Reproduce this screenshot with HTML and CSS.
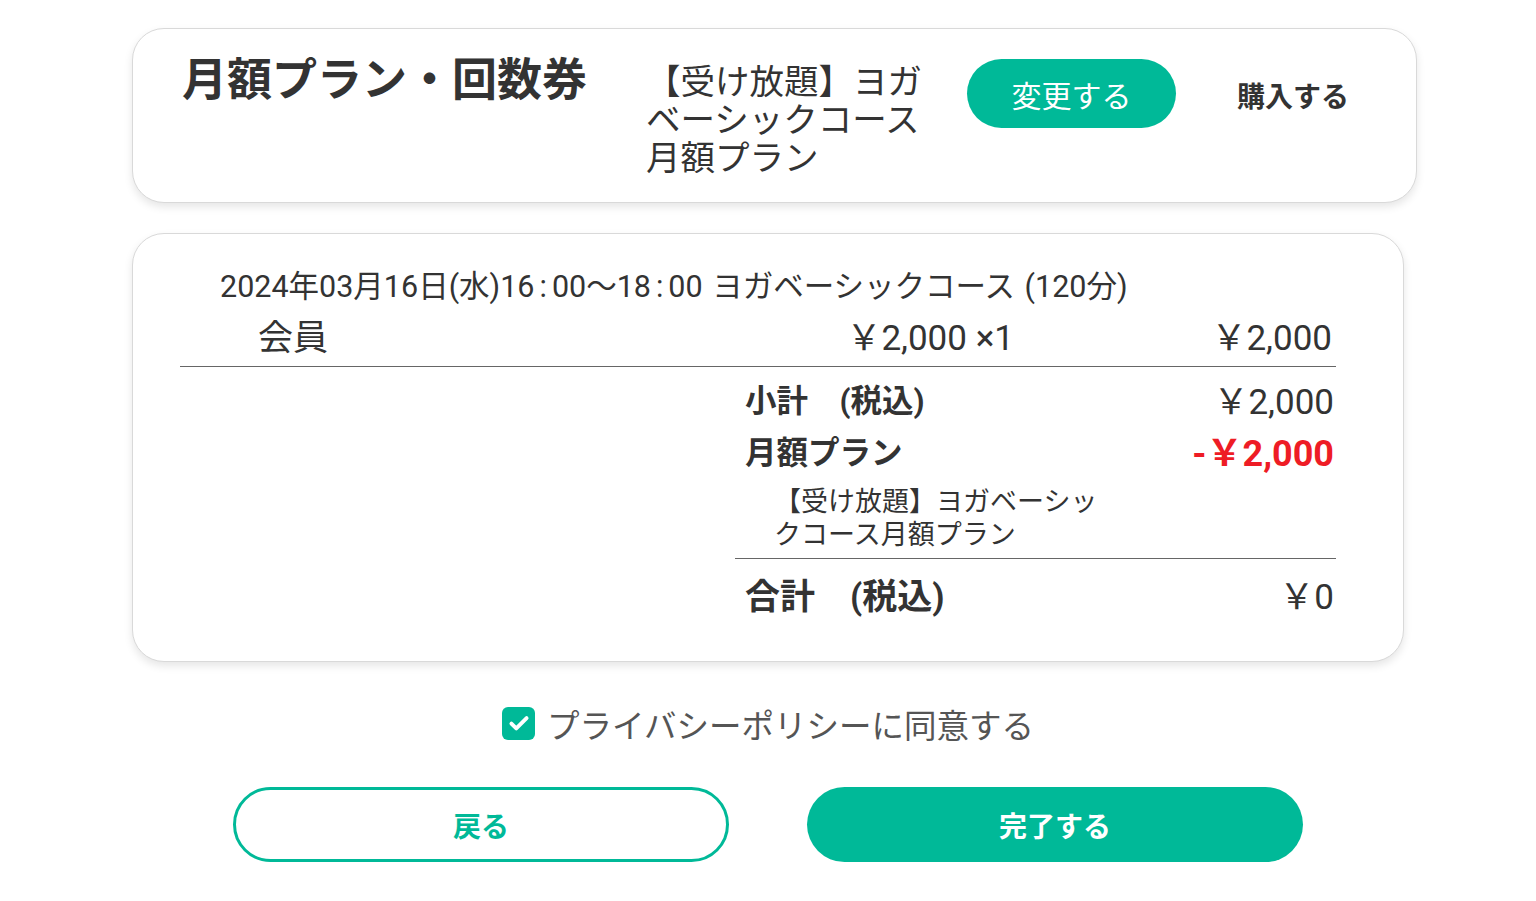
FILE: index.html
```html
<!DOCTYPE html>
<html lang="ja">
<head>
<meta charset="utf-8">
<title>確認</title>
<link rel="stylesheet" href="styles.css">
</head>
<body>
<div class="page">
  <section class="card plan-card">
    <h1 class="plan-title">月額プラン・回数券</h1>
    <div class="plan-name">【受け放題】ヨガ<br>ベーシックコース<br>月額プラン</div>
    <button class="btn-change">変更する</button>
    <div class="buy">購入する</div>
  </section>

  <section class="card order-card">
    <div class="order-date">2024年03月16日(水)16<span class="colon">:</span>00～18<span class="colon">:</span>00 ヨガベーシックコース (120分)</div>
    <div class="order-row">
      <span class="member">会員</span>
      <span class="unit">￥2,000 ×1</span>
      <span class="line-total">￥2,000</span>
    </div>
    <div class="summary">
      <div class="sum-row">
        <span class="sum-label">小計　(税込)</span>
        <span class="sum-value">￥2,000</span>
      </div>
      <div class="sum-row discount">
        <span class="sum-label">月額プラン</span>
        <span class="sum-value red">-￥2,000</span>
      </div>
      <div class="discount-note">【受け放題】ヨガベーシックコース月額プラン</div>
      <div class="sum-row total">
        <span class="sum-label big">合計　(税込)</span>
        <span class="sum-value">￥0</span>
      </div>
    </div>
  </section>

  <label class="agree">
    <span class="check"><svg viewBox="0 0 24 24" width="26" height="26"><path d="M5 12.5l4.5 4.5L19 7.5" fill="none" stroke="#fff" stroke-width="3.6" stroke-linecap="round" stroke-linejoin="round"/></svg></span>
    <span class="agree-text">プライバシーポリシーに同意する</span>
  </label>

  <div class="actions">
    <button class="btn btn-back">戻る</button>
    <button class="btn btn-done">完了する</button>
  </div>
</div>
</body>
</html>
```

FILE: styles.css
```css
* { box-sizing: border-box; }
html, body { margin: 0; padding: 0; background: #fff; }
body {
  font-family: Roboto, "Noto Sans CJK JP", sans-serif;
  color: #333;
}
.page {
  padding: 28px 0 0 132px;
  width: 1536px;
  height: 901px;
  overflow: hidden;
}
.card {
  background: #fff;
  border: 1px solid #d9d9d9;
  border-radius: 32px;
  box-shadow: 0 4px 8px rgba(0,0,0,0.10);
}
.plan-card {
  width: 1285px;
  height: 175px;
  display: flex;
  align-items: flex-start;
  padding: 32px 0 0 49px;
}
.plan-title {
  margin: -3px 0 0 0;
  width: 463px;
  font-family: "Noto Sans CJK JP", sans-serif;
  font-size: 45px;
  font-weight: 700;
  line-height: 38px;
  color: #333;
}
.plan-name {
  width: 322px;
  font-family: "Noto Sans CJK JP", sans-serif;
  font-size: 34.5px;
  line-height: 38px;
  color: #333;
  margin: -1px 0 0 1px;
}
.btn-change {
  margin: -2px 0 0 -1px;
  width: 209px;
  height: 69px;
  border: none;
  border-radius: 35px;
  background: #00b998;
  color: #fff;
  font-family: "Noto Sans CJK JP", sans-serif;
  font-size: 30px;
}
.buy {
  margin: 15px 0 0 61px;
  font-family: "Noto Sans CJK JP", sans-serif;
  font-size: 28px;
  font-weight: 700;
  line-height: 38px;
  color: #333;
}
.order-card {
  margin-top: 30px;
  width: 1272px;
  height: 429px;
  padding: 31px 67px 0 47px;
}
.order-date {
  padding-left: 40px;
  font-size: 30.5px;
  line-height: 44px;
  height: 44px;
  white-space: nowrap;
  word-spacing: 2px;
}
.colon { margin: 0 5px; }
.order-row {
  display: grid;
  grid-template-columns: 1fr auto 318px;
  align-items: center;
  height: 58px;
  padding: 0 4px 6px 78px;
  border-bottom: 1px solid #666;
  font-size: 35px;
}
.unit, .line-total { text-align: right; }
.summary {
  margin-left: 555px;
  padding-top: 6px;
}
.sum-row {
  display: flex;
  justify-content: space-between;
  align-items: center;
  height: 50px;
  padding: 0 2px 0 10px;
}
.sum-row.discount { height: 54px; }
.sum-label {
  font-family: Roboto, "Noto Sans CJK JP", sans-serif;
  font-size: 31.5px;
  font-weight: 700;
}
.sum-label.big { font-size: 35px; }
.sum-value { font-size: 35px; }
.sum-value.red {
  color: #ee1c25;
  font-weight: 700;
  font-size: 36px;
}
.discount-note {
  width: 330px;
  margin: 6px 0 0 39px;
  font-family: "Noto Sans CJK JP", sans-serif;
  font-size: 27px;
  line-height: 33px;
  padding-bottom: 9px;
}
.sum-row.total {
  border-top: 1px solid #666;
  height: 60px;
  padding-top: 9px;
  align-items: center;
}
.agree {
  display: flex;
  align-items: center;
  justify-content: center;
  gap: 12px;
  width: 1272px;
  margin-top: 41px;
  height: 40px;
}
.check {
  width: 33px;
  height: 33px;
  border-radius: 6px;
  background: #00b998;
  display: flex;
  align-items: center;
  justify-content: center;
}
.agree-text {
  font-family: "Noto Sans CJK JP", sans-serif;
  font-size: 32.5px;
  color: #555;
}
.actions {
  display: flex;
  gap: 78px;
  margin: 44px 0 0 101px;
}
.btn {
  width: 496px;
  height: 75px;
  border-radius: 38px;
  font-family: "Noto Sans CJK JP", sans-serif;
  font-size: 28px;
  font-weight: 700;
}
.btn-back {
  background: #fff;
  border: 3px solid #00b998;
  color: #00b998;
}
.btn-done {
  background: #00b998;
  border: none;
  color: #fff;
}
```
